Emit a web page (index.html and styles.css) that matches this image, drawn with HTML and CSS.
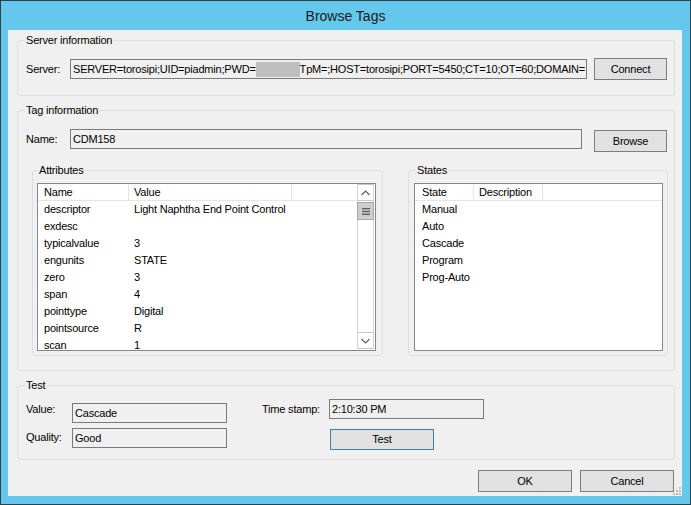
FILE: index.html
```html
<!DOCTYPE html>
<html>
<head>
<meta charset="utf-8">
<title>Browse Tags</title>
<link rel="stylesheet" href="styles.css">
</head>
<body>
<div class="window">
  <div class="titlebar">Browse Tags</div>
  <div class="client">
    <fieldset class="group server-group">
      <legend>Server information</legend>
      <div class="server-body">
        <span class="lbl lbl-row">Server:</span>
        <div class="textbox tb-server"><span>SERVER=torosipi;UID=piadmin;PWD=</span><span class="redact"></span><span>TpM=;HOST=torosipi;PORT=5450;CT=10;OT=60;DOMAIN=</span></div>
        <button class="btn btn-side">Connect</button>
      </div>
    </fieldset>

    <fieldset class="group tag-group">
      <legend>Tag information</legend>
      <div class="tag-body">
        <div class="name-row">
          <span class="lbl lbl-row lbl-name">Name:</span>
          <div class="textbox tb-name">CDM158</div>
          <button class="btn btn-side btn-browse">Browse</button>
        </div>
        <div class="lists-row">
          <fieldset class="group attr-group">
            <legend>Attributes</legend>
            <div class="sub-body attr-body">
              <div class="listview">
                <div class="lv-main">
                  <div class="lv-header">
                    <div class="hcell hc-name">Name</div>
                    <div class="hcell hc-value">Value</div>
                    <div class="hfill"></div>
                  </div>
                  <div class="lv-row"><span class="c-name">descriptor</span><span class="c-value">Light Naphtha End Point Control</span></div>
                  <div class="lv-row"><span class="c-name">exdesc</span><span class="c-value"></span></div>
                  <div class="lv-row"><span class="c-name">typicalvalue</span><span class="c-value">3</span></div>
                  <div class="lv-row"><span class="c-name">engunits</span><span class="c-value">STATE</span></div>
                  <div class="lv-row"><span class="c-name">zero</span><span class="c-value">3</span></div>
                  <div class="lv-row"><span class="c-name">span</span><span class="c-value">4</span></div>
                  <div class="lv-row"><span class="c-name">pointtype</span><span class="c-value">Digital</span></div>
                  <div class="lv-row"><span class="c-name">pointsource</span><span class="c-value">R</span></div>
                  <div class="lv-row"><span class="c-name">scan</span><span class="c-value">1</span></div>
                </div>
                <div class="vscroll">
                  <div class="sb-btn sb-up">
                    <svg width="9" height="6" viewBox="0 0 9 6"><path d="M0.5 5 L4.5 1 L8.5 5" fill="none" stroke="#606060" stroke-width="1.2"/></svg>
                  </div>
                  <div class="sb-thumb">
                    <svg width="8" height="7" viewBox="0 0 8 7"><rect x="0" y="0" width="8" height="1.4" fill="#606060"/><rect x="0" y="2.8" width="8" height="1.4" fill="#606060"/><rect x="0" y="5.6" width="8" height="1.4" fill="#606060"/></svg>
                  </div>
                  <div class="sb-track"></div>
                  <div class="sb-btn sb-down">
                    <svg width="9" height="6" viewBox="0 0 9 6"><path d="M0.5 1 L4.5 5 L8.5 1" fill="none" stroke="#606060" stroke-width="1.2"/></svg>
                  </div>
                </div>
              </div>
            </div>
          </fieldset>
          <fieldset class="group states-group">
            <legend>States</legend>
            <div class="sub-body states-body">
              <div class="listview">
                <div class="lv-main">
                  <div class="lv-header">
                    <div class="hcell hc-state">State</div>
                    <div class="hcell hc-desc">Description</div>
                    <div class="hfill"></div>
                  </div>
                  <div class="lv-row"><span class="c-state">Manual</span></div>
                  <div class="lv-row"><span class="c-state">Auto</span></div>
                  <div class="lv-row"><span class="c-state">Cascade</span></div>
                  <div class="lv-row"><span class="c-state">Program</span></div>
                  <div class="lv-row"><span class="c-state">Prog-Auto</span></div>
                </div>
              </div>
            </div>
          </fieldset>
        </div>
      </div>
    </fieldset>

    <fieldset class="group test-group">
      <legend>Test</legend>
      <div class="test-body">
        <div class="test-left">
          <div class="test-line">
            <span class="lbl lbl-test lbl-value">Value:</span>
            <div class="textbox tb-test">Cascade</div>
          </div>
          <div class="test-line line-quality">
            <span class="lbl lbl-test lbl-quality">Quality:</span>
            <div class="textbox tb-test">Good</div>
          </div>
        </div>
        <div class="test-right">
          <div class="test-line">
            <span class="lbl lbl-time">Time stamp:</span>
            <div class="textbox tb-test">2:10:30 PM</div>
          </div>
          <button class="btn btn-test">Test</button>
        </div>
      </div>
    </fieldset>

    <div class="dialog-buttons">
      <button class="btn btn-dialog">OK</button>
      <button class="btn btn-dialog">Cancel</button>
    </div>

    <svg class="sizegrip" width="10" height="10" viewBox="0 0 10 10">
      <rect x="8" y="2" width="2" height="2" fill="#bcbcbc"/>
      <rect x="5" y="5" width="2" height="2" fill="#bcbcbc"/>
      <rect x="8" y="5" width="2" height="2" fill="#bcbcbc"/>
      <rect x="2" y="8" width="2" height="2" fill="#bcbcbc"/>
      <rect x="5" y="8" width="2" height="2" fill="#bcbcbc"/>
      <rect x="8" y="8" width="2" height="2" fill="#bcbcbc"/>
    </svg>
  </div>
</div>
</body>
</html>
```

FILE: styles.css
```css
* { box-sizing: border-box; }

html, body {
  margin: 0;
  padding: 0;
  background: #63c8eb;
}

body {
  font-family: "Liberation Sans", Arial, sans-serif;
  font-size: 11px;
  letter-spacing: -0.2px;
  color: #000;
  width: 691px;
  height: 505px;
  overflow: hidden;
}

.window {
  width: 691px;
  height: 505px;
  border: 1px solid #2e4049;
  background: #63c8eb;
  display: flex;
  flex-direction: column;
}

.titlebar {
  height: 29px;
  line-height: 31px;
  text-align: center;
  font-size: 14px;
  letter-spacing: 0;
  color: #1b1b1b;
}

.client {
  position: relative;
  margin: 0 8px 0 7px;
  height: 466px;
  background: #f0f0f0;
  padding: 4px 7px 0 9px;
  display: flex;
  flex-direction: column;
}

/* group boxes */
.group {
  margin: 0;
  padding: 0;
  min-width: 0;
  border: 1px solid #d9dfe3;
  border-radius: 3px;
}

.group > legend {
  padding: 0 1px;
  height: 13px;
  line-height: 13px;
  margin-left: 7px;
}

.attr-group > legend { margin-left: 5px; }
.states-group > legend { margin-left: 7px; }

.server-body {
  display: flex;
  align-items: center;
  padding: 11px 7px 15px 8px;
}

.lbl { white-space: nowrap; }
.lbl-row { width: 44px; }

.textbox {
  height: 20px;
  border: 1px solid #7a7a7a;
  background: #f0f0f0;
  line-height: 18px;
  padding: 0 2px;
  white-space: nowrap;
  overflow: hidden;
}

.tb-server { width: 517px; }
.tb-name { width: 512px; }

.redact {
  display: inline-block;
  width: 44px;
  height: 15px;
  background: #bfbfbf;
  vertical-align: -4px;
}

.btn {
  font-family: "Liberation Sans", Arial, sans-serif;
  font-size: 11px;
  letter-spacing: -0.2px;
  color: #000;
  background: #e1e1e1;
  border: 1px solid #7d7d7d;
  border-radius: 0;
  padding: 0;
  margin: 0;
  height: 22px;
  line-height: 20px;
  text-align: center;
}

.btn-side { width: 73px; margin-left: 7px; }

/* tag info */
.tag-group { margin-top: 8px; }

.tag-body {
  padding: 12px 6px 14px 14px;
}

.name-row {
  display: flex;
  align-items: flex-start;
  margin-left: -6px;
}

.lbl-name { line-height: 20px; }
.btn-browse { margin-left: 12px; margin-top: 1px; }

.lists-row {
  display: flex;
  margin-top: 12px;
}

.attr-group { width: 351px; height: 192px; }
.states-group { width: 260px; height: 192px; margin-left: 25px; }

.attr-body { padding: 6px 6px 3px 4px; }
.states-body { padding: 6px 4px 3px 5px; }

.listview {
  height: 168px;
  border: 1px solid #828790;
  background: #fff;
  display: flex;
}

.lv-main {
  flex: 1;
  overflow: hidden;
  min-width: 0;
}

.lv-header {
  display: flex;
  height: 17px;
  border-bottom: 1px solid #e5e5e5;
}

.hcell {
  border-right: 1px solid #e5e5e5;
  line-height: 16px;
  white-space: nowrap;
}

.hfill { flex: 1; }

.hc-name { width: 91px; padding-left: 6px; }
.hc-value { width: 163px; padding-left: 5px; }
.hc-state { width: 59px; padding-left: 7px; }
.hc-desc { width: 69px; padding-left: 5px; }

.lv-row {
  display: flex;
  height: 17px;
  line-height: 17px;
  white-space: nowrap;
}

.c-name { width: 91px; padding-left: 6px; }
.c-value { padding-left: 5px; }
.c-state { padding-left: 7px; }

/* scrollbar */
.vscroll {
  width: 17px;
  margin: 0 1px 1px 0;
  display: flex;
  flex-direction: column;
  border-left: 1px solid #d4d4d4;
  border-right: 1px solid #d4d4d4;
}

.sb-btn {
  height: 17px;
  display: flex;
  align-items: center;
  justify-content: center;
  background: #fff;
}

.sb-up { border-top: 1px solid #c8c8c8; border-bottom: 1px solid #c8c8c8; }
.sb-down { border-top: 1px solid #c8c8c8; border-bottom: 1px solid #c8c8c8; }

.sb-thumb {
  height: 18px;
  margin: 1px -1px 0;
  background: #cdcdcd;
  border: 1px solid #a8a8a8;
  display: flex;
  align-items: center;
  justify-content: center;
}

.sb-track { flex: 1; }

/* test */
.test-group { margin-top: 8px; }

.test-body {
  display: flex;
  align-items: flex-start;
  padding: 7px 8px 9px 8px;
}

.test-left { padding-top: 4px; width: 201px; }

.test-line {
  display: flex;
  align-items: flex-start;
}

.line-quality { margin-top: 5px; }

.lbl-test { width: 46px; line-height: 13px; }
.lbl-quality { padding-top: 3px; }

.tb-test { width: 155px; }

.test-right { margin-left: 35px; }

.lbl-time { width: 67px; line-height: 13px; padding-top: 4px; }

.btn-test {
  display: block;
  width: 104px;
  height: 21px;
  line-height: 19px;
  margin: 10px 0 0 68px;
  border-color: #3c7fb1;
}

/* dialog buttons */
.dialog-buttons {
  display: flex;
  justify-content: flex-end;
  gap: 8px;
  margin-top: 10px;
  margin-right: 1px;
}

.btn-dialog { width: 94px; }

.sizegrip {
  position: absolute;
  right: 1px;
  bottom: 1px;
}
```
